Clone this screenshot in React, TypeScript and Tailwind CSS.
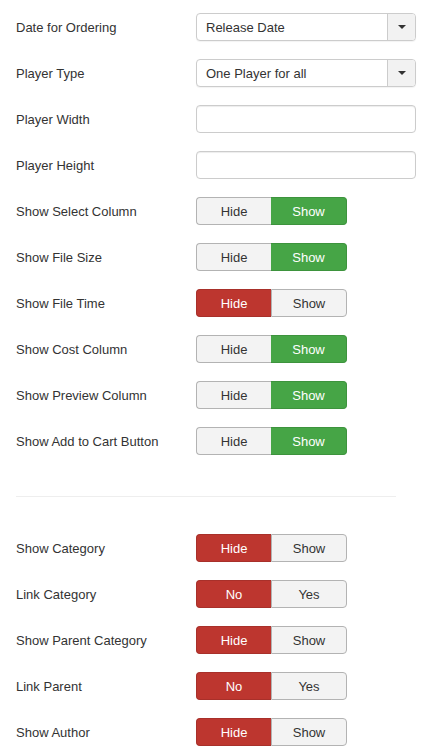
const font = { fontFamily: '"Liberation Sans", Arial, sans-serif' };

type Opt = { label: string; kind: 'select' | 'input' | 'toggle'; value?: string; on?: boolean; yesNo?: boolean };

const top: Opt[] = [
  { label: 'Date for Ordering', kind: 'select', value: 'Release Date' },
  { label: 'Player Type', kind: 'select', value: 'One Player for all' },
  { label: 'Player Width', kind: 'input' },
  { label: 'Player Height', kind: 'input' },
  { label: 'Show Select Column', kind: 'toggle', on: true },
  { label: 'Show File Size', kind: 'toggle', on: true },
  { label: 'Show File Time', kind: 'toggle', on: false },
  { label: 'Show Cost Column', kind: 'toggle', on: true },
  { label: 'Show Preview Column', kind: 'toggle', on: true },
  { label: 'Show Add to Cart Button', kind: 'toggle', on: true },
];

const bottom: Opt[] = [
  { label: 'Show Category', kind: 'toggle', on: false },
  { label: 'Link Category', kind: 'toggle', on: false, yesNo: true },
  { label: 'Show Parent Category', kind: 'toggle', on: false },
  { label: 'Link Parent', kind: 'toggle', on: false, yesNo: true },
  { label: 'Show Author', kind: 'toggle', on: false },
];

function Select({ value }: { value: string }) {
  return (
    <div className="flex h-[28px] w-[220px] overflow-hidden rounded-[4px] border border-[#ccc] bg-white shadow-[0_1px_1px_rgba(0,0,0,0.05)]">
      <div className="flex flex-1 items-center pl-[9px] pt-[2px] text-[13px] text-[#333]">{value}</div>
      <div className="flex w-[28px] items-center justify-center border-l border-[#ccc] bg-[#f2f2f2]">
        <svg width="8" height="4" viewBox="0 0 8 4">
          <path d="M0 0h8L4 4z" fill="#333" />
        </svg>
      </div>
    </div>
  );
}

function Toggle({ on, yesNo }: { on?: boolean; yesNo?: boolean }) {
  const left = yesNo ? 'No' : 'Hide';
  const right = yesNo ? 'Yes' : 'Show';
  return (
    <div className="flex h-[28px] text-[13px]">
      <div
        className={
          on
            ? 'flex w-[75px] items-center justify-center rounded-l-[4px] border border-r-0 border-[#b3b3b3] bg-[#f3f3f3] pt-[2px] text-[#333]'
            : 'flex w-[75px] items-center justify-center rounded-l-[4px] border border-r-0 border-[#a8302a] bg-[#bd362f] pt-[2px] text-white'
        }
      >
        {left}
      </div>
      <div
        className={
          on
            ? 'flex w-[76px] items-center justify-center rounded-r-[4px] border border-l-0 border-[#3d933d] bg-[#46a546] pt-[2px] text-white'
            : 'flex w-[76px] items-center justify-center rounded-r-[4px] border border-[#b3b3b3] bg-[#f3f3f3] pt-[2px] text-[#333]'
        }
      >
        {right}
      </div>
    </div>
  );
}

function Row({ o }: { o: Opt }) {
  return (
    <div className="mb-[18px] flex h-[28px] shrink-0 items-center">
      <div className="w-[196px] pl-[16px] pt-[2px] text-[13px] text-[#333]">{o.label}</div>
      {o.kind === 'select' && <Select value={o.value || ''} />}
      {o.kind === 'input' && (
        <div className="h-[28px] w-[220px] rounded-[4px] border border-[#ccc] bg-white shadow-[inset_0_1px_1px_rgba(0,0,0,0.075)]" />
      )}
      {o.kind === 'toggle' && <Toggle on={o.on} yesNo={o.yesNo} />}
    </div>
  );
}

export default function App() {
  return (
    <div className="flex h-[756px] w-[437px] flex-col overflow-hidden bg-white pt-[13px]" style={font}>
      {top.map((o) => (
        <Row key={o.label} o={o} />
      ))}
      <div className="mx-[16px] mt-[23px] mb-[37px] w-[380px] shrink-0 border-t border-[#eee]" />
      {bottom.map((o) => (
        <Row key={o.label} o={o} />
      ))}
    </div>
  );
}
